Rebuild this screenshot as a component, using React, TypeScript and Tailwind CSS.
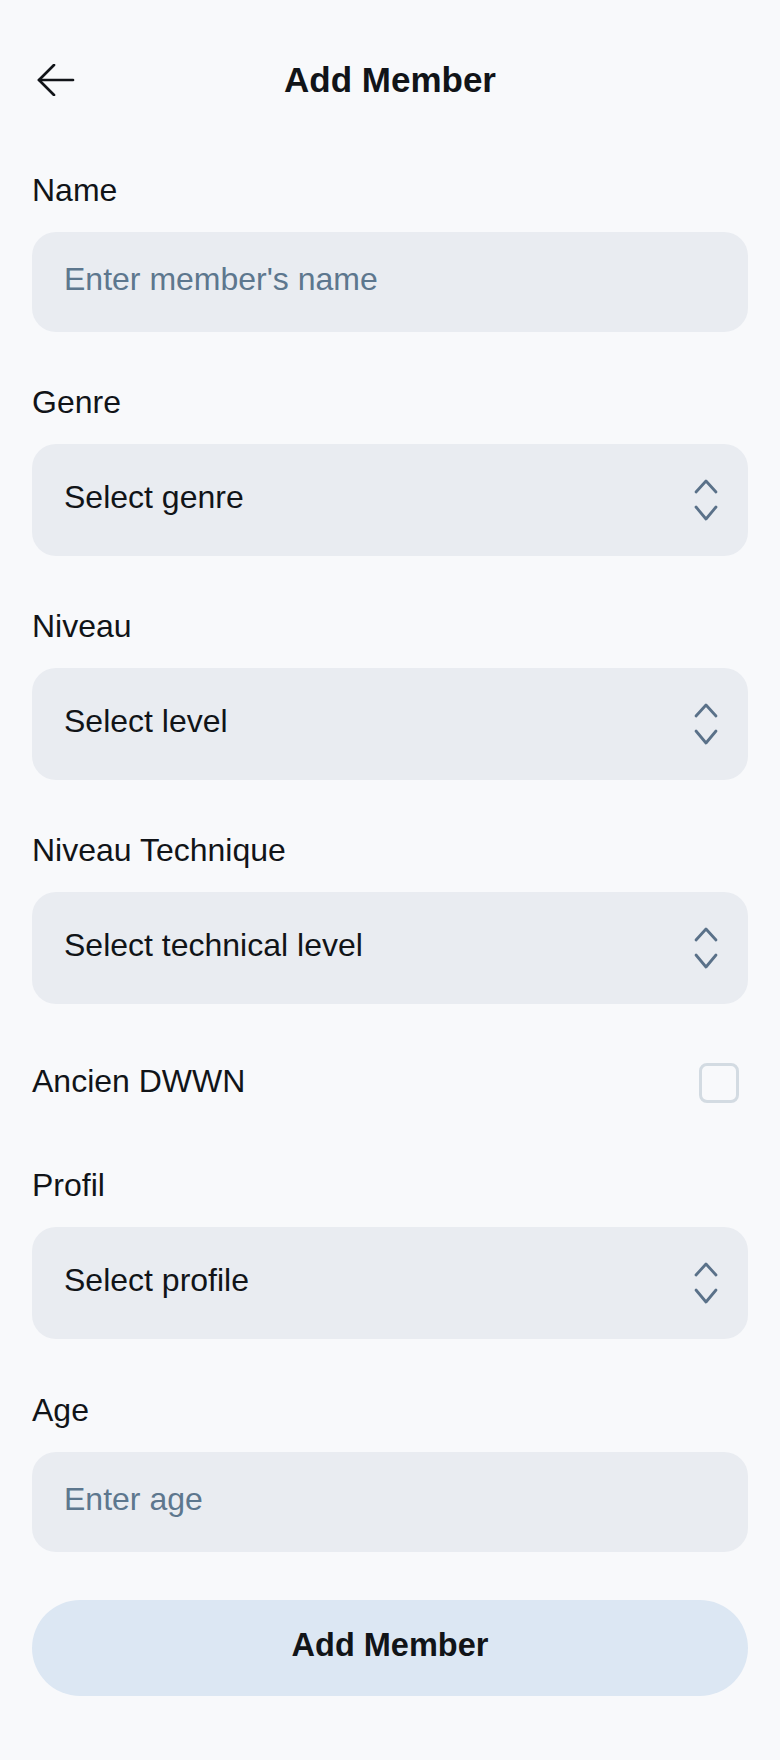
import React from "react";

const font = { fontFamily: '"Liberation Sans", Arial, sans-serif' };

function Chevrons() {
  return (
    <svg width="26" height="44" viewBox="0 0 26 44" fill="none" stroke="#5a7189" strokeWidth="2.8" strokeLinecap="round" strokeLinejoin="round">
      <polyline points="3,14 13,3 23,14" />
      <polyline points="3,29 13,41 23,29" />
    </svg>
  );
}

function Label({ children, className = "" }: { children: React.ReactNode; className?: string }) {
  return <div className={"text-[32px] leading-[36px] text-[#111418] " + className}>{children}</div>;
}

function SelectBox({ text }: { text: string }) {
  return (
    <div className="mt-[24px] h-[112px] rounded-[24px] bg-[#e9ecf1] flex items-center justify-between pl-8 pr-[29px]">
      <span className="text-[32px] text-[#111418] pb-[7px]">{text}</span>
      <Chevrons />
    </div>
  );
}

function InputBox({ placeholder }: { placeholder: string }) {
  return (
    <div className="mt-[24px] h-[100px] rounded-[24px] bg-[#e9ecf1] flex items-center pl-8">
      <span className="text-[32px] text-[#5d778e] pb-[6px]">{placeholder}</span>
    </div>
  );
}

export default function App() {
  return (
    <div className="min-h-[1760px] w-[780px] bg-[#f8f9fb] px-8 pt-[44px]" style={font}>
      <div className="relative h-[72px] flex items-center justify-center">
        <svg className="absolute left-[5px] top-[20px]" width="38" height="32" viewBox="0 0 38 32" fill="none" stroke="#111418" strokeWidth="2.7" strokeLinecap="round" strokeLinejoin="round">
          <line x1="2" y1="16" x2="36" y2="16" />
          <polyline points="17,1 2,16 17,31" />
        </svg>
        <h1 className="text-[35px] font-bold text-[#111418]">Add Member</h1>
      </div>

      <Label className="mt-[56px]">Name</Label>
      <InputBox placeholder="Enter member's name" />

      <Label className="mt-[52px]">Genre</Label>
      <SelectBox text="Select genre" />

      <Label className="mt-[52px]">Niveau</Label>
      <SelectBox text="Select level" />

      <Label className="mt-[52px]">Niveau Technique</Label>
      <SelectBox text="Select technical level" />

      <div className="mt-[59px] h-[40px] flex items-center justify-between pr-[9px]">
        <span className="text-[32px] leading-[36px] text-[#111418] pb-[5px]">Ancien DWWN</span>
        <div className="w-[40px] h-[40px] rounded-[8px] border-[3px] border-[#d3dbe2]" />
      </div>

      <Label className="mt-[64px]">Profil</Label>
      <SelectBox text="Select profile" />

      <Label className="mt-[53px]">Age</Label>
      <InputBox placeholder="Enter age" />

      <button className="mt-[48px] w-full h-[96px] rounded-full bg-[#dce7f3] text-[32.5px] font-bold text-[#111418] pb-[6px]">
        Add Member
      </button>
    </div>
  );
}
